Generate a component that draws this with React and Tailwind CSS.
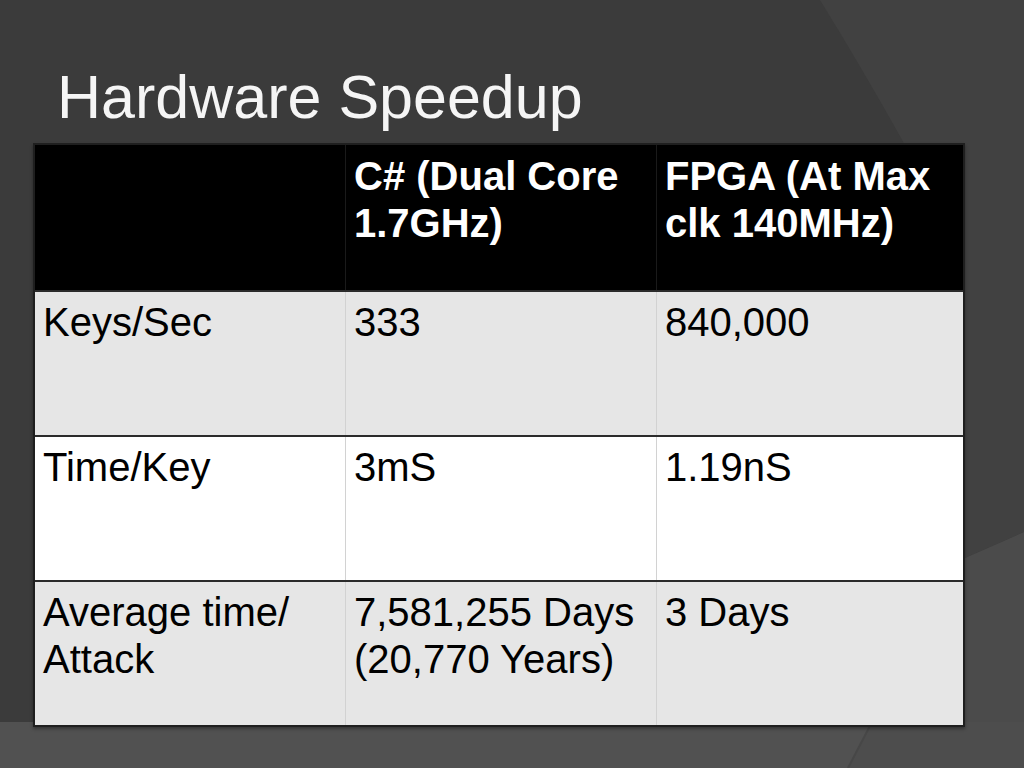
const rows = [
  { cells: ['Keys/Sec', '333', '840,000'], bg: 'bg-[#e6e6e6]' },
  { cells: ['Time/Key', '3mS', '1.19nS'], bg: 'bg-white' },
  {
    cells: ['Average time/ Attack', '7,581,255 Days (20,770 Years)', '3 Days'],
    bg: 'bg-[#e6e6e6]',
  },
];

function Backdrop() {
  return (
    <svg className="absolute inset-0" width="1024" height="768" viewBox="0 0 1024 768">
      <rect width="1024" height="768" fill="#3b3b3b" />
      {/* lighter panel behind the upper right */}
      <path d="M820 0 Q862 68 905 145 L962 270 L965 558 L1024 532 L1024 0 Z" fill="#414141" />
      <path d="M965 558 L1024 532 L1024 768 L965 768 Z" fill="#4b4b4b" />
      {/* floor band under the table */}
      <rect x="0" y="722" width="1024" height="46" fill="#515151" />
      <path d="M872 722 L1024 722 L1024 768 L848 768 Z" fill="#4d4d4d" />
      <path d="M872 722 L848 768" stroke="#474747" strokeWidth="2" />
    </svg>
  );
}

export default function App() {
  return (
    <div className="relative w-[1024px] h-[768px] overflow-hidden font-['Liberation_Sans',Arial,sans-serif]">
      <Backdrop />

      <div className="relative">
        {/* Title */}
        <div className="h-[143px] pt-[67px] pl-[57px]">
          <h1 className="text-[61px] leading-none text-[#f5f5f5] font-normal">Hardware Speedup</h1>
        </div>

        {/* Table */}
        <div className="ml-[33px] w-[932px] border-2 border-[#1f1f1f] shadow-[0_2px_3px_rgba(0,0,0,0.35)]">
          <div className="grid grid-cols-[310px_311px_1fr] h-[145px] bg-black text-white font-bold text-[40px] leading-[47px]">
            <div className="px-[8px] pt-[8px]"></div>
            <div className="px-[8px] pt-[8px] border-l border-[#1a1a1a]">C# (Dual Core 1.7GHz)</div>
            <div className="px-[8px] pt-[8px] border-l border-[#1a1a1a]">FPGA (At Max clk 140MHz)</div>
          </div>

          {rows.map((row, i) => (
            <div
              key={i}
              className={`grid grid-cols-[310px_311px_1fr] h-[145px] border-t-2 border-[#2b2b2b] text-black text-[40px] leading-[47px] ${row.bg}`}
            >
              {row.cells.map((c, j) => (
                <div key={j} className={`px-[8px] pt-[7px] ${j > 0 ? 'border-l border-[#d2d2d2]' : ''}`}>
                  {c}
                </div>
              ))}
            </div>
          ))}
        </div>
      </div>
    </div>
  );
}
